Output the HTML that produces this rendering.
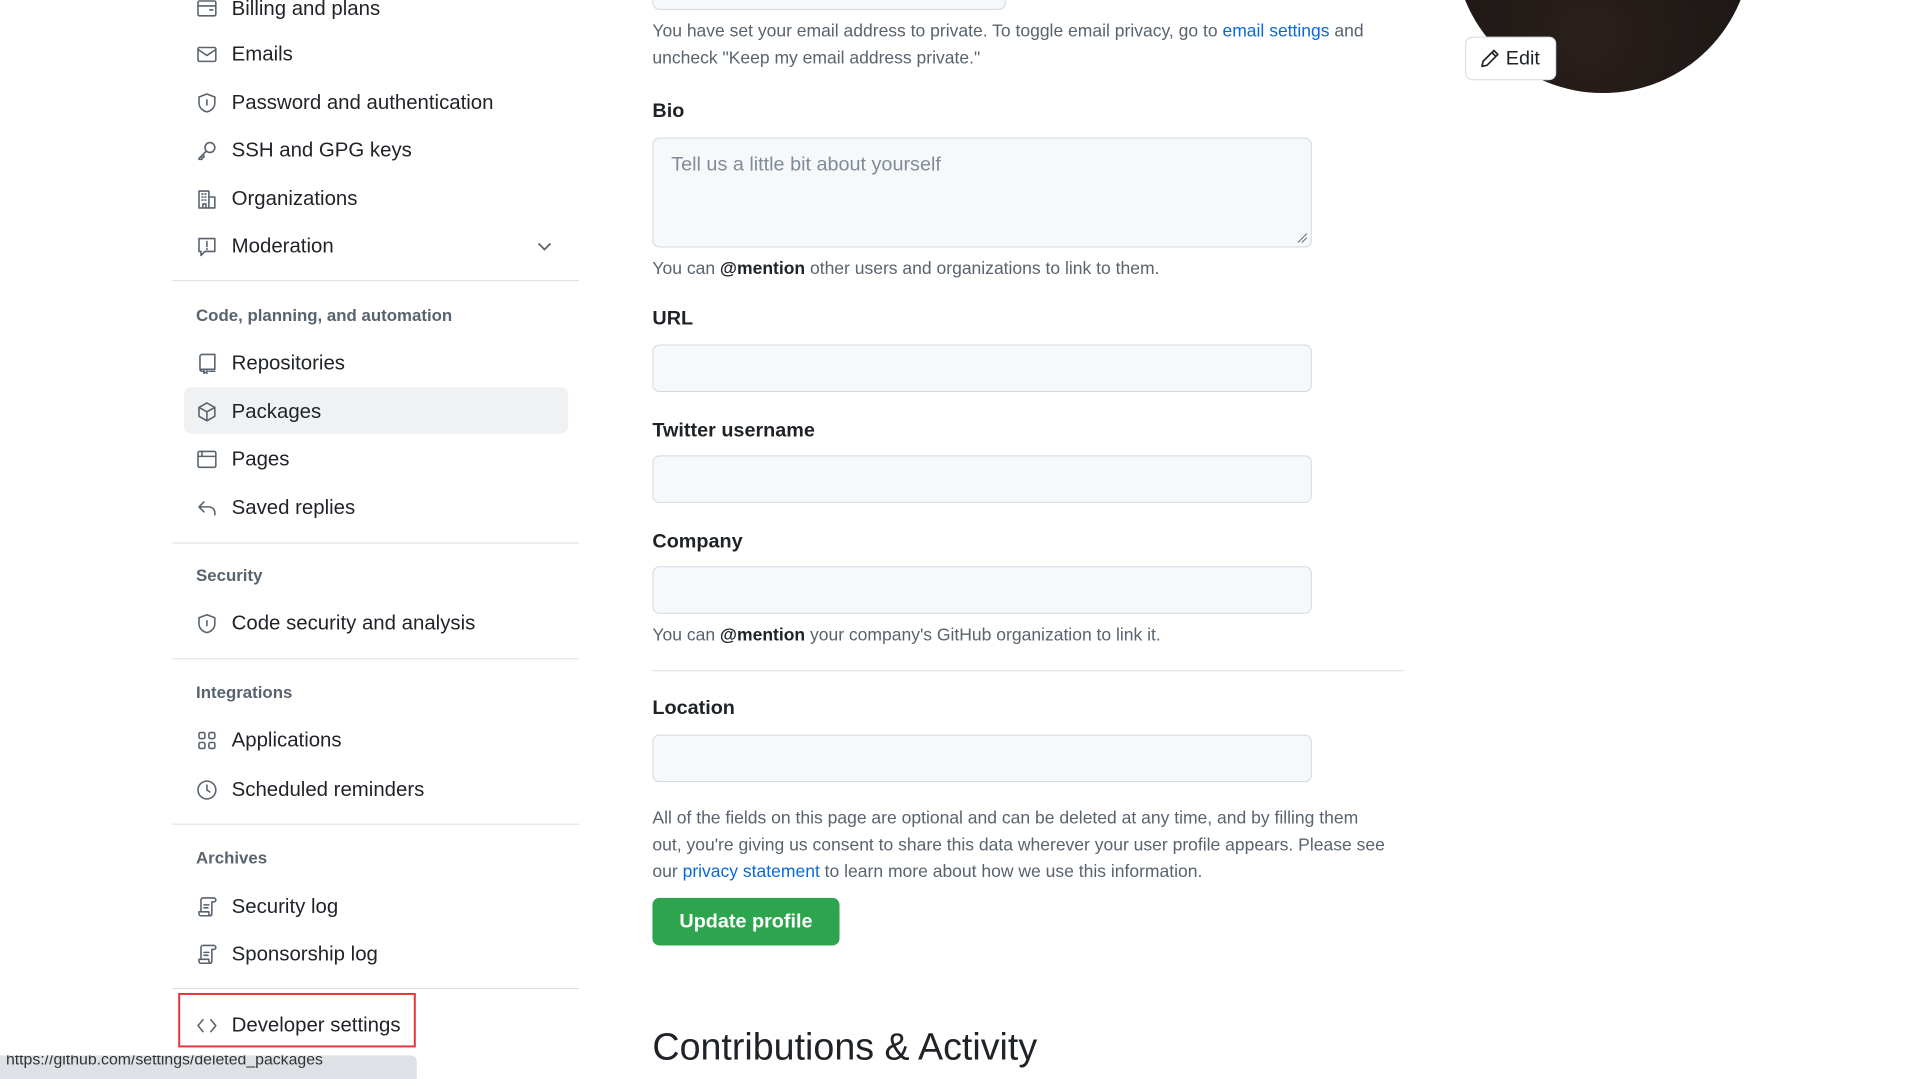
<!DOCTYPE html>
<html><head><meta charset="utf-8"><style>
*{box-sizing:border-box;margin:0;padding:0}
body{width:1911px;height:1073px;overflow:hidden;background:#fff;font-family:"Liberation Sans",sans-serif;color:#1f2328;position:relative}
#w{position:absolute;left:0;top:0;width:1930px;height:1090px;transform:scale(0.99);transform-origin:0 0}
.a{position:absolute;white-space:nowrap}
.it{position:absolute;left:198px;font-size:20.6px;line-height:24px;color:#1f2328}
.it svg{position:absolute;left:0;top:1px;width:22px;height:22px;fill:none;stroke:#59636e;stroke-width:1.6;stroke-linecap:round;stroke-linejoin:round}
.it span{position:absolute;left:36px;top:0;white-space:nowrap}
.hd{position:absolute;left:198px;font-size:17px;font-weight:bold;color:#59636e}
.dv{position:absolute;left:174px;width:411px;height:1px;background:#d8dee4}
.lbl{position:absolute;left:659px;font-size:20px;font-weight:bold;color:#1f2328}
.inp{position:absolute;left:659px;width:666px;height:48px;background:#f6f8fa;border:1px solid #d1d9e0;border-radius:7px}
.p{position:absolute;left:659px;font-size:17.7px;color:#59636e;line-height:27px;white-space:nowrap}
a{color:#0969da;text-decoration:none}
</style></head><body><div id="w">

<div class="it" style="top:-3px"><svg viewBox="0 0 22 22"><rect x="2" y="3" width="18" height="15" rx="1.5"/><path d="M2 8h18M14 12h3"/></svg><span>Billing and plans</span></div>
<div class="it" style="top:43px"><svg viewBox="0 0 22 22"><rect x="2" y="4" width="18" height="14" rx="1.5"/><path d="M2 6l9 6 9-6"/></svg><span>Emails</span></div>
<div class="it" style="top:92px"><svg viewBox="0 0 22 22"><path d="M11 2l8 3v6c0 5-4 8-8 9-4-1-8-4-8-9V5z"/><path d="M11 8v5"/></svg><span>Password and authentication</span></div>
<div class="it" style="top:140px"><svg viewBox="0 0 22 22"><circle cx="14" cy="8" r="5"/><path d="M10 12l-7 7v1h3v-2h2v-2"/></svg><span>SSH and GPG keys</span></div>
<div class="it" style="top:189px"><svg viewBox="0 0 22 22"><path d="M3 20V3h10v17M13 9h6v11H3M6 6h1M9 6h1M6 9h1M9 9h1M6 12h1M9 12h1M7 20v-4h3v4"/></svg><span>Organizations</span></div>
<div class="it" style="top:237px"><svg viewBox="0 0 22 22"><path d="M3 3h16v13H9l-4 4v-4H3z"/><path d="M11 6v5M11 13v1"/></svg><span>Moderation</span></div>
<svg class="a" style="left:542px;top:243px" width="16" height="12" viewBox="0 0 16 12" fill="none" stroke="#59636e" stroke-width="1.8"><path d="M2 3l6 6 6-6"/></svg>
<div class="dv" style="top:283px"></div>
<div class="hd" style="top:309px">Code, planning, and automation</div>
<div class="it" style="top:355px"><svg viewBox="0 0 22 22"><path d="M4 17V4a2 2 0 012-2h13v15H4zM4 17a2 2 0 002 2h1M13 19h6M8 17v4l1.5-1 1.5 1v-4"/></svg><span>Repositories</span></div>
<div class="a" style="left:186px;top:391px;width:388px;height:47px;background:#eff1f3;border-radius:7px"></div>
<div class="it" style="top:404px"><svg viewBox="0 0 22 22"><path d="M11 2l8 4.5v9L11 20l-8-4.5v-9zM3 6.5l8 4.5 8-4.5M11 11v9"/></svg><span>Packages</span></div>
<div class="it" style="top:452px"><svg viewBox="0 0 22 22"><rect x="2" y="3" width="18" height="16" rx="1.5"/><path d="M2 8h18M6 3v5"/></svg><span>Pages</span></div>
<div class="it" style="top:501px"><svg viewBox="0 0 22 22"><path d="M8 5L3 10l5 5M3 10h10a6 6 0 016 6v2"/></svg><span>Saved replies</span></div>
<div class="dv" style="top:548px"></div>
<div class="hd" style="top:572px">Security</div>
<div class="it" style="top:618px"><svg viewBox="0 0 22 22"><path d="M11 2l8 3v6c0 5-4 8-8 9-4-1-8-4-8-9V5z"/><path d="M11 8v5"/></svg><span>Code security and analysis</span></div>
<div class="dv" style="top:665px"></div>
<div class="hd" style="top:690px">Integrations</div>
<div class="it" style="top:736px"><svg viewBox="0 0 22 22"><rect x="3" y="3" width="6" height="6" rx="1.5"/><rect x="13" y="3" width="6" height="6" rx="1.5"/><rect x="3" y="13" width="6" height="6" rx="1.5"/><rect x="13" y="13" width="6" height="6" rx="1.5"/></svg><span>Applications</span></div>
<div class="it" style="top:786px"><svg viewBox="0 0 22 22"><circle cx="11" cy="11" r="9"/><path d="M11 6v5l3 2"/></svg><span>Scheduled reminders</span></div>
<div class="dv" style="top:832px"></div>
<div class="hd" style="top:857px">Archives</div>
<div class="it" style="top:904px"><svg viewBox="0 0 22 22"><path d="M5 20a2 2 0 01-2-2v-2h10v2a2 2 0 002 2H5zM5 16V4a2 2 0 012-2h11a2 2 0 010 4h-2v12a2 2 0 01-2 2M8 9h5M8 12h4"/></svg><span>Security log</span></div>
<div class="it" style="top:952px"><svg viewBox="0 0 22 22"><path d="M5 20a2 2 0 01-2-2v-2h10v2a2 2 0 002 2H5zM5 16V4a2 2 0 012-2h11a2 2 0 010 4h-2v12a2 2 0 01-2 2M8 9h5M8 12h4"/></svg><span>Sponsorship log</span></div>
<div class="dv" style="top:998px"></div>
<div class="a" style="left:180px;top:1003px;width:240px;height:55px;border:2px solid #e5343a"></div>
<div class="it" style="top:1024px"><svg viewBox="0 0 22 22"><path d="M7 5l-5 6 5 6M15 5l5 6-5 6"/></svg><span>Developer settings</span></div>
<div class="a" style="left:0;top:1066px;width:421px;height:24px;background:#dee1e6;border-radius:0 6px 0 0;font-size:16px;color:#333;padding-left:6px;line-height:26px;overflow:hidden"><div style="margin-top:-8px">https://github.com/settings/deleted_packages</div></div>

<div class="a" style="left:659px;top:-20px;width:357px;height:30px;border:1px solid #d1d9e0;border-radius:7px;background:#f6f8fa"></div>
<div class="p" style="top:18px">You have set your email address to private. To toggle email privacy, go to <a>email settings</a> and</div>
<div class="p" style="top:45px">uncheck "Keep my email address private."</div>
<div class="lbl" style="top:101px">Bio</div>
<div class="inp" style="top:139px;height:111px"></div>
<div class="a" style="left:678px;top:155px;font-size:20px;color:#818b98">Tell us a little bit about yourself</div>
<svg class="a" style="left:1309px;top:234px" width="12" height="12" stroke="#59636e" stroke-width="1"><path d="M2 11L11 2M6 11L11 6"/></svg>
<div class="p" style="top:258px">You can <b style="color:#1f2328">@mention</b> other users and organizations to link to them.</div>
<div class="lbl" style="top:311px">URL</div>
<div class="inp" style="top:348px"></div>
<div class="lbl" style="top:424px">Twitter username</div>
<div class="inp" style="top:460px"></div>
<div class="lbl" style="top:536px">Company</div>
<div class="inp" style="top:572px"></div>
<div class="p" style="top:628px">You can <b style="color:#1f2328">@mention</b> your company's GitHub organization to link it.</div>
<div class="a" style="left:659px;top:677px;width:759px;height:1px;background:#d8dee4"></div>
<div class="lbl" style="top:704px">Location</div>
<div class="inp" style="top:742px"></div>
<div class="p" style="top:813px">All of the fields on this page are optional and can be deleted at any time, and by filling them</div>
<div class="p" style="top:840px">out, you're giving us consent to share this data wherever your user profile appears. Please see</div>
<div class="p" style="top:867px">our <a>privacy statement</a> to learn more about how we use this information.</div>
<div class="a" style="left:659px;top:907px;width:189px;height:48px;background:#2da44e;border-radius:7px;color:#fff;font-size:20px;font-weight:bold;text-align:center;line-height:48px">Update profile</div>
<div class="a" style="left:659px;top:1037px;font-size:38px;color:#1f2328">Contributions &amp; Activity</div>

<div class="a" style="left:1469px;top:-206px;width:300px;height:300px;border-radius:50%;background:radial-gradient(circle at 45% 80%,#2a1f1b,#1b1715 60%,#151212)"></div>
<div class="a" style="left:1480px;top:37px;width:92px;height:44px;background:#fff;border:1px solid #d1d9e0;border-radius:7px;font-size:20px;line-height:42px;padding-left:40px;color:#1f2328">Edit</div>
<svg class="a" style="left:1494px;top:48px" width="22" height="22" viewBox="0 0 22 22" fill="none" stroke="#1f2328" stroke-width="1.7" stroke-linejoin="round"><path d="M3 19l1-5L15 3l4 4L8 18zM13 5l4 4"/></svg>
</div></body></html>
